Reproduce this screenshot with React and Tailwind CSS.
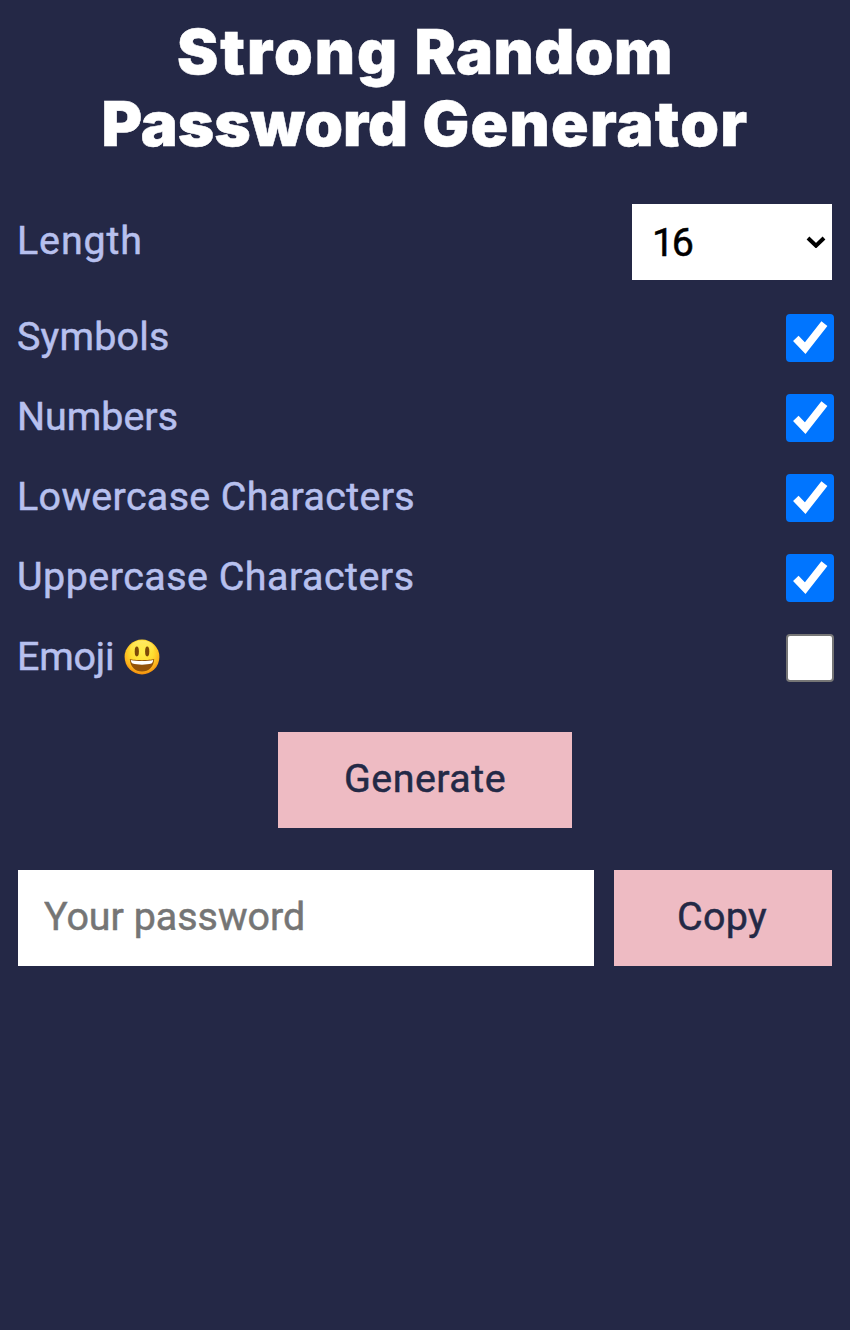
import React, { useState } from "react";

const CHARACTER_SETS = [
  { id: "symbols", label: "Symbols", className: "tracking-[0.2px]" },
  { id: "numbers", label: "Numbers", className: "tracking-[0px]" },
  { id: "lowercase", label: "Lowercase Characters", className: "tracking-[0.35px]" },
  { id: "uppercase", label: "Uppercase Characters", className: "tracking-[0.5px]" },
  { id: "emoji", label: "Emoji", className: "tracking-[-0.2px]" },
];

function GrinningFace() {
  return (
    <svg className="ml-2.5 size-9 shrink-0" viewBox="0 0 36 36" role="img" aria-label="grinning face">
      <defs>
        <radialGradient id="face" cx="50%" cy="36%" r="66%">
          <stop offset="0" stopColor="#ffee48" />
          <stop offset="0.5" stopColor="#ffdc30" />
          <stop offset="0.78" stopColor="#fdb31c" />
          <stop offset="1" stopColor="#f0860a" />
        </radialGradient>
        <linearGradient id="shine" x1="0" y1="0" x2="0" y2="1">
          <stop offset="0" stopColor="#fff6a0" stopOpacity="0.5" />
          <stop offset="1" stopColor="#fff04a" stopOpacity="0" />
        </linearGradient>
      </defs>
      <circle cx="18" cy="18" r="17.4" fill="url(#face)" />
      <ellipse cx="18" cy="9" rx="12" ry="7.5" fill="url(#shine)" />
      <ellipse cx="12.8" cy="12.5" rx="2.1" ry="4.9" fill="#7d4a08" />
      <ellipse cx="23.2" cy="12.5" rx="2.1" ry="4.9" fill="#7d4a08" />
      <path d="M5.8 20C10 21.5 26 21.5 30.2 20C29.6 28.4 24.8 32.4 18 32.4S6.4 28.4 5.8 20Z" fill="#93520a" />
      <path d="M6.8 20.9C11.5 22.3 24.5 22.3 29.2 20.9C29 22.6 28.3 23.8 27.4 24.5C22.5 26 13.5 26 8.6 24.5C7.7 23.8 7 22.6 6.8 20.9Z" fill="#fff" />
    </svg>
  );
}

function Checkbox({ id, checked, onChange }) {
  return (
    <span className="grid size-12 shrink-0">
      <input
        id={id}
        type="checkbox"
        checked={checked}
        onChange={onChange}
        className="col-start-1 row-start-1 size-12 appearance-none rounded-[4px] border-2 border-[#767676] bg-white checked:border-[#0075ff] checked:bg-[#0075ff]"
      />
      {checked && (
        <svg className="pointer-events-none col-start-1 row-start-1 size-12" viewBox="0 0 48 48" fill="none">
          <path d="M9.8 24.3L19.2 34.2L38.4 9.6" stroke="#fff" strokeWidth="7.6" />
        </svg>
      )}
    </span>
  );
}

export default function App() {
  const [length, setLength] = useState("16");
  const [enabled, setEnabled] = useState({
    symbols: true,
    numbers: true,
    lowercase: true,
    uppercase: true,
    emoji: false,
  });

  return (
    <main className="flex min-h-[1330px] w-full flex-col bg-[#242846] font-['Roboto',sans-serif] text-[39.4px] text-[#b7c0ee] [-webkit-text-stroke-width:0.5px]">
      <h1 className="flex flex-col items-center pt-4 font-['Inter',sans-serif] text-[62px] leading-[72px] font-black text-white">
        <span>
          <span className="mr-[3px] tracking-[2px]">Strong</span> <span className="tracking-[0.5px]">Random</span>
        </span>
        <span>
          <span className="mr-[2px]">Password</span> <span className="tracking-[1.3px]">Generator</span>
        </span>
      </h1>

      <div className="mt-11 flex h-[76px] items-center justify-between pr-[18px] pl-[17px]">
        <label htmlFor="length" className="pb-0.5 leading-[48px] tracking-[0.9px]">Length</label>
        <div className="grid h-[76px] w-[200px] items-center bg-white">
          <select
            id="length"
            value={length}
            onChange={(e) => setLength(e.target.value)}
            className="col-start-1 row-start-1 h-[76px] w-full appearance-none bg-transparent pt-0.5 pl-5 tracking-[-2.5px] text-black"
          >
            <option>16</option>
            <option>24</option>
            <option>32</option>
          </select>
          <svg className="pointer-events-none col-start-1 row-start-1 mr-1.5 h-3 w-5 justify-self-end" viewBox="0 0 20 12" fill="none">
            <path d="M2 2L10 9.7L18 2" stroke="#000" strokeWidth="4" />
          </svg>
        </div>
      </div>

      <div className="mt-[34px] flex flex-col gap-8 pr-4 pl-[17px]">
        {CHARACTER_SETS.map(({ id, label, className }) => (
          <div key={id} className="flex h-12 items-center justify-between">
            <label htmlFor={id} className="flex items-center pb-0.5 leading-[48px]">
              <span className={className}>{label}</span>
              {id === "emoji" && <GrinningFace />}
            </label>
            <Checkbox
              id={id}
              checked={enabled[id]}
              onChange={() => setEnabled({ ...enabled, [id]: !enabled[id] })}
            />
          </div>
        ))}
      </div>

      <button className="mt-[50px] h-24 w-[294px] self-center bg-[#eebbc3] pb-0.5 text-[#232946]">
        <span className="tracking-[0.5px]">Generate</span>
      </button>

      <div className="mt-[42px] flex gap-5 px-[18px]">
        <input
          placeholder="Your password"
          className="h-24 w-[576px] bg-white pb-[3px] pl-[26px] text-black placeholder:text-[#757575]"
        />
        <button className="h-24 w-[218px] bg-[#eebbc3] pr-0.5 pb-0.5 text-[#232946]">
          <span className="tracking-[0.3px]">Copy</span>
        </button>
      </div>
    </main>
  );
}
